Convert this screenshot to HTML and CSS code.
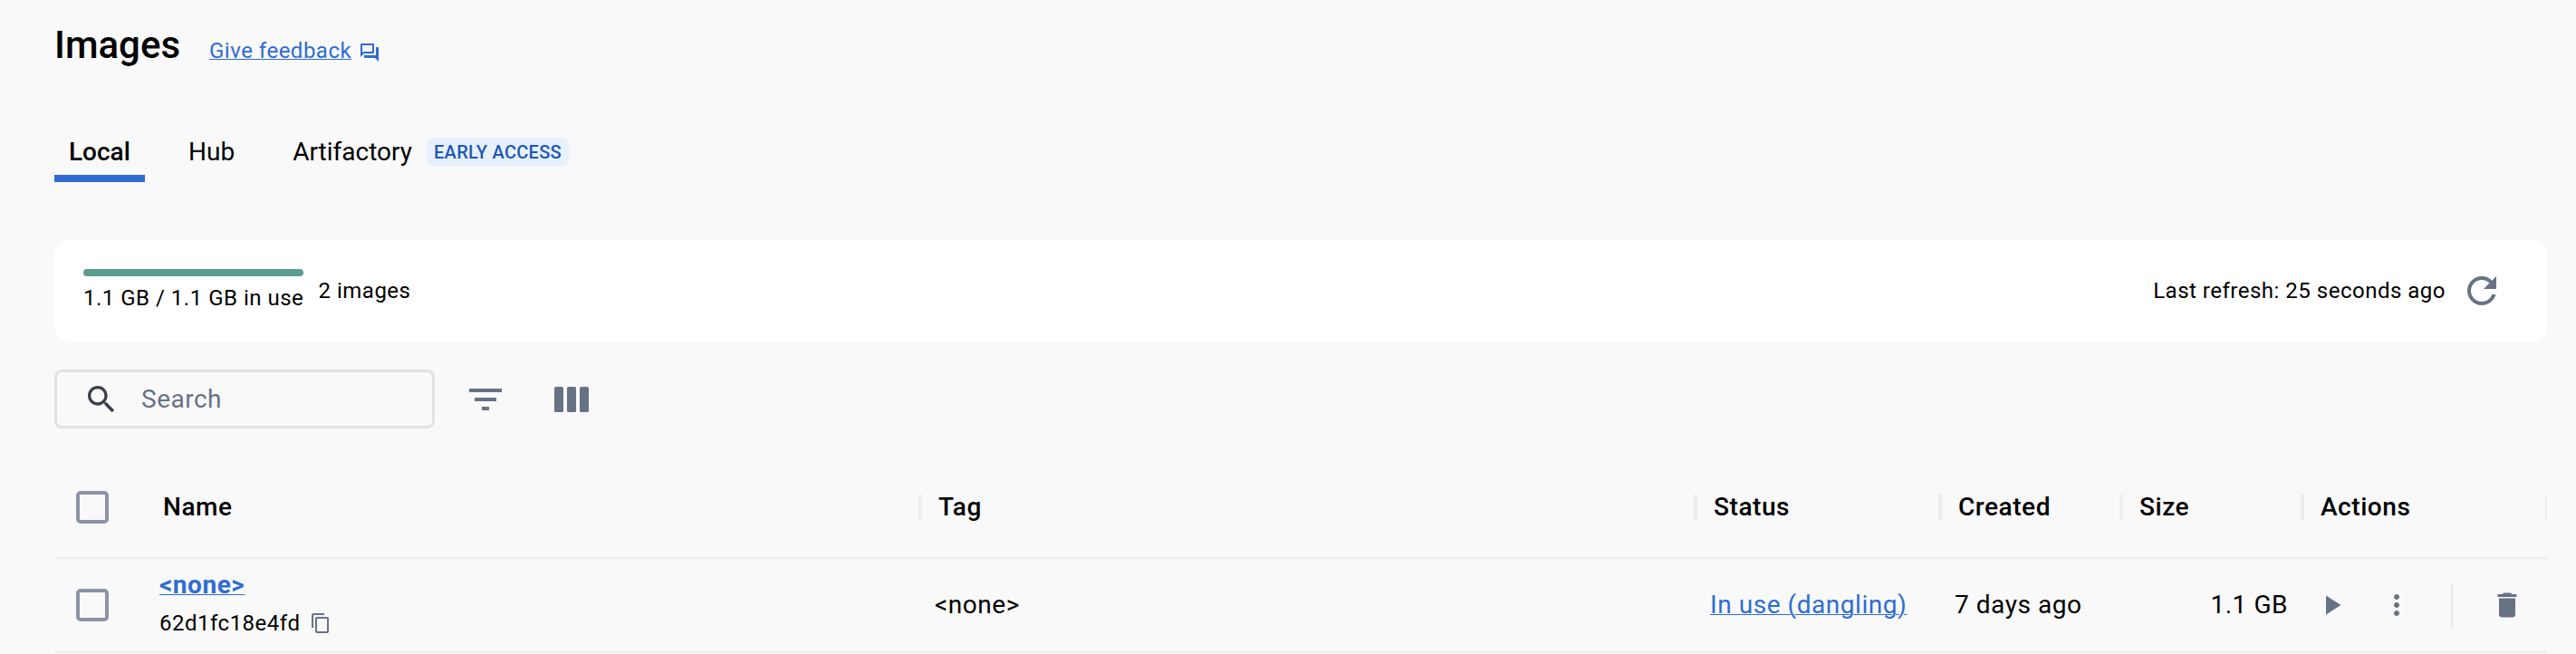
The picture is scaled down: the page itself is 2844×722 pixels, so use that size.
FILE: index.html
```html
<!DOCTYPE html>
<html lang="en">
<head>
<meta charset="utf-8">
<title>Images</title>
<link rel="stylesheet" href="styles.css">
</head>
<body>
<main class="page">
  <header class="heading">
    <h1 class="title">Images</h1>
    <a class="feedback" href="#"><span class="feedback-text">Give feedback</span><svg class="icon-sm" viewBox="0 0 24 24"><path d="M15 4v7H5.17L4 12.17V4h11m1-2H3c-.55 0-1 .45-1 1v14l4-4h10c.55 0 1-.45 1-1V3c0-.55-.45-1-1-1zm5 4h-2v9H6v2c0 .55.45 1 1 1h11l4 4V7c0-.55-.45-1-1-1z"/></svg></a>
  </header>
  <nav class="tabs">
    <a class="tab active">Local</a>
    <a class="tab">Hub</a>
    <a class="tab">Artifactory<span class="badge">EARLY ACCESS</span></a>
  </nav>
  <section class="usage">
    <div class="meter"><div class="meter-bar"></div><span class="meter-label">1.1 GB / 1.1 GB in use</span></div>
    <span class="count">2 images</span>
    <span class="refresh">Last refresh: 25 seconds ago</span>
    <svg class="icon-lg" viewBox="0 0 24 24"><path d="M17.65 6.35C16.2 4.9 14.21 4 12 4c-4.42 0-7.99 3.58-7.99 8s3.57 8 7.99 8c3.73 0 6.84-2.55 7.73-6h-2.08c-.82 2.33-3.04 4-5.65 4-3.31 0-6-2.69-6-6s2.69-6 6-6c1.66 0 3.14.69 4.22 1.78L13 11h7V4l-2.35 2.35z"/></svg>
  </section>
  <section class="toolbar">
    <div class="search">
      <svg class="icon-search" viewBox="0 0 24 24"><path d="M15.5 14h-.79l-.28-.27C15.41 12.59 16 11.11 16 9.5 16 5.91 13.09 3 9.5 3S3 5.91 3 9.5 5.91 16 9.5 16c1.61 0 3.09-.59 4.23-1.57l.27.28v.79l5 4.99L20.49 19l-4.99-5zm-6 0C7.01 14 5 11.99 5 9.5S7.01 5 9.5 5 14 7.01 14 9.5 11.99 14 9.5 14z"/></svg>
      <span class="placeholder">Search</span>
    </div>
    <svg class="icon-lg filter" viewBox="0 0 24 24"><path d="M10 18h4v-2h-4v2zM3 6v2h18V6H3zm3 7h12v-2H6v2z"/></svg>
    <svg class="icon-columns" viewBox="0 0 38 28"><rect width="10" height="28" rx="1.5"/><rect x="14" width="10" height="28" rx="1.5"/><rect x="28" width="10" height="28" rx="1.5"/></svg>
  </section>
  <section class="table">
    <div class="row head">
      <div class="check-cell"><span class="checkbox"></span></div>
      <div class="th">Name</div>
      <div class="th">Tag</div>
      <div class="th">Status</div>
      <div class="th">Created</div>
      <div class="th">Size</div>
      <div class="th last">Actions</div>
    </div>
    <div class="row body">
      <div class="check-cell"><span class="checkbox"></span></div>
      <div class="td name">
        <a class="name-link" href="#">&lt;none&gt;</a>
        <div class="id">62d1fc18e4fd<svg class="icon-sm copy" viewBox="0 0 24 24"><path d="M16 1H4c-1.1 0-2 .9-2 2v14h2V3h12V1zm3 4H8c-1.1 0-2 .9-2 2v14c0 1.1.9 2 2 2h11c1.1 0 2-.9 2-2V7c0-1.1-.9-2-2-2zm0 16H8V7h11v14z"/></svg></div>
      </div>
      <div class="td">&lt;none&gt;</div>
      <div class="td"><a class="link" href="#">In use (dangling)</a></div>
      <div class="td">7 days ago</div>
      <div class="td size">1.1 GB</div>
      <div class="td actions">
        <svg class="icon-md" viewBox="0 0 24 24"><path d="M8 5v14l11-7z"/></svg>
        <svg class="icon-md more" viewBox="0 0 24 24"><path d="M12 8c1.1 0 2-.9 2-2s-.9-2-2-2-2 .9-2 2 .9 2 2 2zm0 2c-1.1 0-2 .9-2 2s.9 2 2 2 2-.9 2-2-.9-2-2-2zm0 6c-1.1 0-2 .9-2 2s.9 2 2 2 2-.9 2-2-.9-2-2-2z"/></svg>
        <span class="divider"></span>
        <svg class="icon-md" viewBox="0 0 24 24"><path d="M6 19c0 1.1.9 2 2 2h8c1.1 0 2-.9 2-2V7H6v12zM19 4h-3.5l-1-1h-5l-1 1H5v2h14V4z"/></svg>
      </div>
    </div>
  </section>
</main>
</body>
</html>
```

FILE: styles.css
```css
* { box-sizing: border-box; }
body { margin: 0; background: #f9f9f9; color: #000; font-family: Roboto, sans-serif; font-size: 28px; line-height: 36px; }
.page { height: 722px; overflow: hidden; padding: 25px 32px 0 60px; }
svg { display: block; flex: none; fill: #677285; }
.icon-sm { width: 24px; height: 24px; }
.icon-md { width: 36px; height: 36px; }
.icon-lg { width: 48px; height: 48px; }
.heading { display: flex; align-items: baseline; height: 111px; }
.title { margin: 0; font-size: 42px; font-weight: 500; line-height: 50px; width: 171px; }
.feedback { display: flex; align-items: center; gap: 8px; color: #2e6dd3; font-size: 24px; letter-spacing: .5px; line-height: 30px; }
.feedback .icon-sm { fill: #2e6dd3; margin-top: 3px; }
.feedback, .link, .name-link { text-decoration: none; }
.feedback-text, .link, .name-link { text-decoration: underline; text-decoration-thickness: 1px; }
.tabs { display: flex; gap: 32px; height: 65px; margin-bottom: 64px; }
.tab { display: flex; align-items: center; height: 65px; padding: 7px 16px 0; border-bottom: 8px solid transparent; }
.tab.active { font-weight: 500; border-color: #2e6dd3; width: 100px; }
.badge { margin: -1px 0 0 16px; padding: 0 8px; height: 32px; line-height: 32px; border-radius: 8px; background: #e7f1fb; color: #2057b8; font-size: 20px; font-weight: 500; letter-spacing: .3px; }
.usage { display: flex; align-items: center; height: 112px; padding: 0 48px 0 32px; border-radius: 16px; background: #fff; font-size: 24px; letter-spacing: .5px; }
.meter { width: 243px; white-space: nowrap; padding-top: 4px; }
.meter-bar { height: 8px; border-radius: 4px; background: #5a9e8f; margin-bottom: 6px; }
.meter-label { display: block; line-height: 36px; margin-bottom: 2px; }
.count { margin-left: 16.5px; }
.refresh { margin-left: auto; margin-right: 16px; }
.toolbar { display: flex; align-items: center; margin-top: 31px; height: 65px; }
.search { display: flex; align-items: center; width: 420px; height: 65px; padding-left: 29px; border: 3px solid #e1e2e6; border-radius: 8px; color: #677285; letter-spacing: .5px; }
.icon-search { width: 40px; height: 40px; fill: #393f49; }
.placeholder { margin-left: 24px; }
.filter { margin-left: 32px; }
.icon-columns { width: 38px; height: 28px; margin-left: 52px; }
.table { margin-top: 32px; letter-spacing: .55px; }
.row { display: grid; grid-template-columns: 116px 840px 856px 270px 200px 200px 270px; border-bottom: 2px solid #ededef; align-items: center; }
.head { height: 112px; font-weight: 500; }
.body { height: 104px; }
.check-cell { padding-left: 24px; }
.checkbox { display: block; width: 36px; height: 36px; border: 4px solid #8c92a8; border-radius: 5px; }
.th { height: 28px; line-height: 28px; padding-left: 4px; border-right: 4px solid #ededef; margin-right: -2px; }
.th + .th { padding-left: 20px; }
.th.last { border-right-width: 2px; margin-right: 0; }
.td { padding-left: 16px; }
.td.name { padding-left: 0; }
.name-link { display: block; width: fit-content; font-weight: 700; line-height: 36px; }
.link, .name-link { color: #2e6dd3; }
.id { display: flex; align-items: center; font-size: 24px; line-height: 36px; margin-top: 6px; margin-bottom: 2px; letter-spacing: .5px; }
.copy { margin-left: 11px; }
.size { text-align: right; padding-right: 16px; }
.actions { display: flex; align-items: center; padding-left: 14px; }
.more { margin-left: 36px; }
.divider { width: 2px; height: 48px; margin: 0 42px; background: #e8e8ea; }
```
